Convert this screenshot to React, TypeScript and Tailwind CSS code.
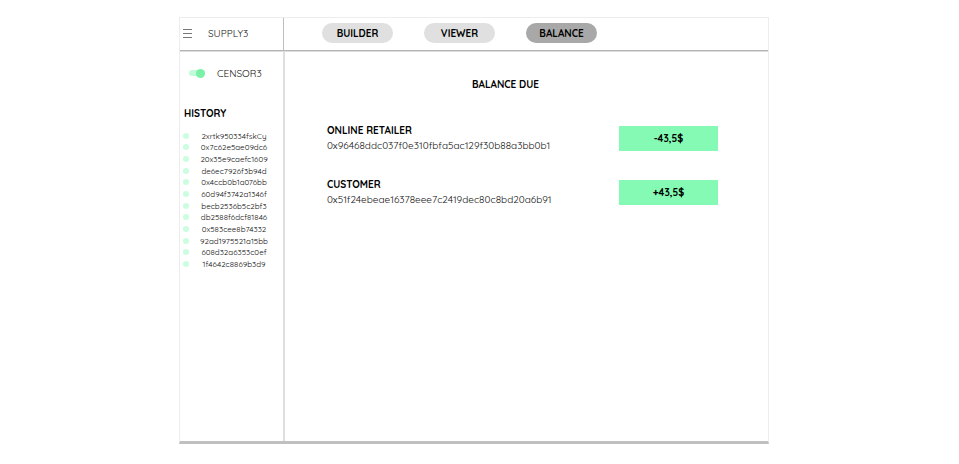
import { useState } from "react";

const history = [
  "2xrtk950334fskCy",
  "0x7c62e5ae09dc6",
  "20x35e9caefc1609",
  "de6ec7926f3b94d",
  "0x4ccb0b1a076bb",
  "60d94f3742a1346f",
  "becb2536b5c2bf3",
  "db2588f6dcf81846",
  "0x583cee8b74332",
  "92ad1975521a15bb",
  "608d32a6353c0ef",
  "1f4642c8869b3d9",
];

const tabs = ["BUILDER", "VIEWER", "BALANCE"];

const balances = [
  { name: "ONLINE RETAILER", address: "0x96468ddc037f0e310fbfa5ac129f30b88a3bb0b1", amount: "-43,5$" },
  { name: "CUSTOMER", address: "0x51f24ebeae16378eee7c2419dec80c8bd20a6b91", amount: "+43,5$" },
];

function Header({ active, onSelect }: { active: string; onSelect: (tab: string) => void }) {
  return (
    <header className="flex h-[33px] shrink-0 border-b border-[#b5b5b5] shadow-[0_1px_0_#dcdcdc]">
      <div className="flex w-[104px] shrink-0 items-center gap-4 border-r border-[#bdbdbd] pb-[2px] pl-[3px]">
        <button type="button" aria-label="Menu" className="text-[#777777]">
          <svg viewBox="0 0 9 9" className="h-[9px] w-[9px]" stroke="currentColor" strokeWidth="1">
            <path d="M0 .5h9M0 4.5h9M0 8.5h9" />
          </svg>
        </button>
        <span className="text-[10px] text-[#111111]">SUPPLY3</span>
      </div>
      <nav className="flex items-center gap-[31px] pb-[2px] pl-[38px]">
        {tabs.map((tab) => (
          <button
            key={tab}
            type="button"
            onClick={() => onSelect(tab)}
            className={`h-5 w-[71px] rounded-full text-[10px] font-bold text-black ${
              tab === active ? "bg-[#a8a8a8]" : "bg-[#e0e0e0]"
            }`}
          >
            {tab}
          </button>
        ))}
      </nav>
    </header>
  );
}

function Sidebar() {
  return (
    <aside className="flex w-[105px] shrink-0 flex-col border-r-2 border-[#dedede] pt-[14px]">
      <label className="flex h-4 items-center gap-3 pl-[9px] text-[10px] text-[#111111]">
        <span className="relative flex h-[9px] w-4 items-center">
          <input type="checkbox" defaultChecked className="peer absolute inset-0 m-0 opacity-0" />
          <span className="h-[6px] w-full rounded-full bg-gray-200 peer-checked:bg-[#c2fbd9]" />
          <span className="absolute left-0 h-[9px] w-[9px] rounded-full bg-gray-400 peer-checked:right-0 peer-checked:left-auto peer-checked:bg-[#79f2a8]" />
        </span>
        CENSOR3
      </label>
      <h2 className="mt-[25px] pl-1 text-[10px] leading-4 font-bold text-black">HISTORY</h2>
      <ul className="mt-2 grid h-[140px] auto-rows-fr">
        {history.map((hash) => (
          <li key={hash} className="flex items-center pr-[12px] pl-[3px]">
            <span className="h-[6px] w-[6px] shrink-0 rounded-full bg-[#cdfde0]" />
            <span className="flex-1 pl-2 text-center text-[8px] leading-none text-[#111111]">{hash}</span>
          </li>
        ))}
      </ul>
    </aside>
  );
}

function BalanceDue() {
  return (
    <main className="flex-1 pt-[26px] pr-[50px] pl-[42px]">
      <h1 className="pr-[34px] text-center text-[10px] leading-4 font-bold text-black">BALANCE DUE</h1>
      <div className="mt-[30px] flex flex-col gap-6">
        {balances.map((row) => (
          <section key={row.name} className="flex h-[30px] items-center justify-between">
            <div className="text-[10px] leading-[15px]">
              <h2 className="font-bold text-black">{row.name}</h2>
              <p className="text-[#111111]">{row.address}</p>
            </div>
            <p className="flex h-[25px] w-[99px] items-center justify-center bg-[#84fab4] text-[10px] font-bold text-black">
              {row.amount}
            </p>
          </section>
        ))}
      </div>
    </main>
  );
}

export default function App() {
  const [active, setActive] = useState("BALANCE");
  return (
    <div className="flex min-h-screen bg-white pt-[17px] pr-[190px] pb-5 pl-[179px] font-['Quicksand','Lato',sans-serif]">
      <div className="flex flex-1 flex-col border border-b-[3px] border-[#ededed] border-b-[#c0c0c0]">
        <Header active={active} onSelect={setActive} />
        <div className="flex flex-1">
          <Sidebar />
          <BalanceDue />
        </div>
      </div>
    </div>
  );
}
